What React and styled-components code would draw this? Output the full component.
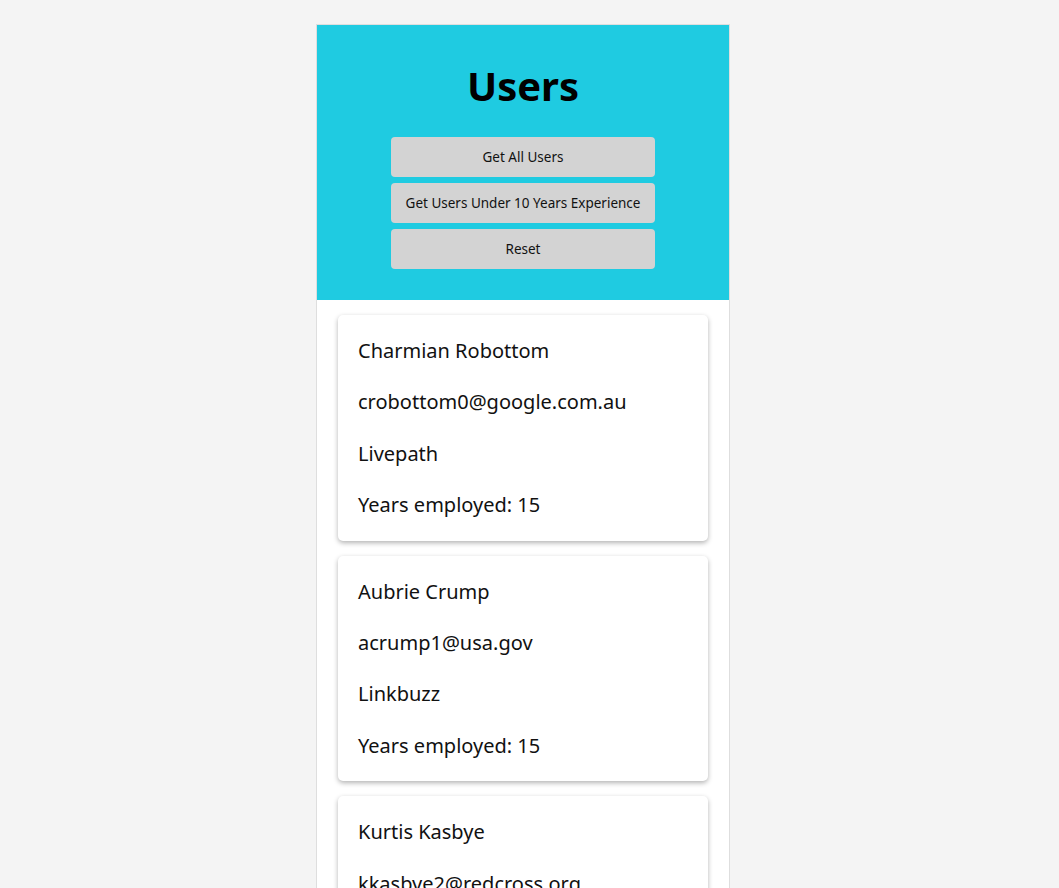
import React from "react";
import styled, { createGlobalStyle } from "styled-components";

const users = [
  { name: "Charmian Robottom", email: "crobottom0@google.com.au", company: "Livepath", years: 15 },
  { name: "Aubrie Crump", email: "acrump1@usa.gov", company: "Linkbuzz", years: 15 },
  { name: "Kurtis Kasbye", email: "kkasbye2@redcross.org", company: "Skinix", years: 12 },
];

const GlobalStyle = createGlobalStyle`
  body {
    margin: 0;
    background: #f4f4f4;
    font-family: "Noto Sans", "Open Sans", sans-serif;
    color: #111;
  }
`;

// leaves room on the right the way a scrollbar gutter would
const Page = styled.div`
  padding-right: 13px;
`;

const Container = styled.div`
  width: 412px;
  margin: 24px auto 0;
  border: 1px solid #dedede;
  background: #fff;
  min-height: 900px;
`;

const Header = styled.header`
  background: #1fcbe1;
  padding: 30px 0 31px;
  display: flex;
  flex-direction: column;
  align-items: center;
`;

const Title = styled.h1`
  margin: 0 0 20px;
  font-size: 40px;
  line-height: 62px;
  font-weight: 700;
  color: #000;
`;

const Buttons = styled.div`
  display: flex;
  flex-direction: column;
  gap: 6px;
  width: 264px;
`;

const Button = styled.button`
  height: 40px;
  border: none;
  border-radius: 4px;
  background: #d3d3d3;
  color: #111;
  font-family: inherit;
  font-size: 13.5px;
  cursor: pointer;
`;

const List = styled.div`
  display: flex;
  flex-direction: column;
  gap: 15px;
  padding: 15px 21px;
`;

const Card = styled.div`
  background: #fff;
  border-radius: 5px;
  padding: 0 20px;
  box-shadow: 0 2px 5px rgba(0, 0, 0, 0.3);
  overflow: hidden;
`;

const Line = styled.p`
  margin: 20px 0;
  font-size: 20px;
  line-height: 31.4px;
`;

export default function App() {
  return (
    <Page>
      <GlobalStyle />
      <Container>
        <Header>
          <Title>Users</Title>
          <Buttons>
            <Button>Get All Users</Button>
            <Button>Get Users Under 10 Years Experience</Button>
            <Button>Reset</Button>
          </Buttons>
        </Header>
        <List>
          {users.map((u) => (
            <Card key={u.email}>
              <Line>{u.name}</Line>
              <Line>{u.email}</Line>
              <Line>{u.company}</Line>
              <Line>Years employed: {u.years}</Line>
            </Card>
          ))}
        </List>
      </Container>
    </Page>
  );
}
